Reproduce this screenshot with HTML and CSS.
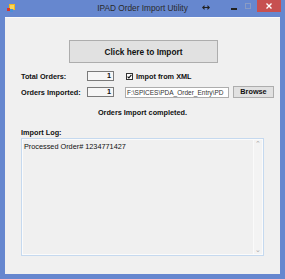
FILE: index.html
```html
<!DOCTYPE html>
<html lang="en">
<head>
  <meta charset="UTF-8">
  <title>IPAD Order Import Utility</title>
  <link rel="stylesheet" href="styles.css">
</head>
<body>

  <div class="window">
    <div class="titlebar">
      <div class="tb-left">
        <svg class="app-icon" width="8" height="8" viewBox="0 0 8 8">
          <rect x="2" y="0" width="6" height="6" fill="#f2b81c"/>
          <rect x="3" y="1" width="4" height="4" fill="#f7d55a"/>
          <rect x="0" y="4" width="3" height="3" fill="#d8362a"/>
          <rect x="3" y="5" width="3" height="3" fill="#4a8fd9"/>
        </svg>
      </div>
      <div class="tb-title">IPAD Order Import Utility</div>
      <div class="tb-right">
        <svg class="resize-icon" width="8" height="5" viewBox="0 0 8 5">
          <path d="M0 2.5 L2.5 0 V5 Z M8 2.5 L5.5 0 V5 Z" fill="#222"/>
          <rect x="2" y="2" width="4" height="1" fill="#222"/>
        </svg>
        <span class="min-btn"></span>
        <span class="max-btn"></span>
        <span class="close-btn">
          <svg width="6" height="6" viewBox="0 0 6 6">
            <path d="M0.5 0.5 L5.5 5.5 M5.5 0.5 L0.5 5.5" stroke="#fff" stroke-width="1.4"/>
          </svg>
        </span>
      </div>
    </div>

    <div class="client">
      <button class="import-btn">Click here to Import</button>

      <div class="row first-row">
        <span class="label">Total Orders:</span>
        <span class="count-box">1</span>
        <span class="check">
          <svg width="7" height="7" viewBox="0 0 7 7">
            <rect x="0.5" y="0.5" width="6" height="6" fill="#fff" stroke="#333"/>
            <path d="M1.6 3.6 L2.9 4.9 L5.4 1.9" fill="none" stroke="#111" stroke-width="1.1"/>
          </svg>
        </span>
        <span class="check-label">Impot from XML</span>
      </div>

      <div class="row">
        <span class="label">Orders Imported:</span>
        <span class="count-box">1</span>
        <span class="path-box">F:\SPICES\PDA_Order_Entry\PD</span>
        <button class="browse-btn">Browse</button>
      </div>

      <div class="status">Orders Import completed.</div>

      <div class="log-label">Import Log:</div>
      <div class="log-box">
        <div class="log-text">Processed Order# 1234771427</div>
        <div class="scrollbar">
          <span class="arrow">&#8963;</span>
          <span class="arrow">&#8964;</span>
        </div>
      </div>
    </div>
  </div>

</body>
</html>
```

FILE: styles.css
```css
body {
  margin: 0;
  font-family: "Liberation Sans", Arial, sans-serif;
  background: #6687cf;
}
.window {
  width: 285px;
  height: 279px;
  background: #6687cf;
  display: flex;
  flex-direction: column;
}
.titlebar {
  height: 17px;
  display: grid;
  grid-template-columns: 1fr auto 1fr;
  align-items: start;
}
.tb-left {
  padding: 4px 0 0 7px;
}
.app-icon { display: block; }
.tb-title {
  font-size: 8.3px;
  color: #2a2a2a;
  line-height: 17px;
}
.tb-right {
  display: flex;
  justify-content: flex-end;
  align-items: flex-start;
  padding-right: 4px;
}
.resize-icon {
  margin-top: 5px;
  margin-right: 21px;
}
.min-btn {
  width: 6px;
  height: 1.5px;
  background: #222;
  margin-top: 8px;
  margin-right: 8px;
}
.max-btn {
  width: 4px;
  height: 4px;
  border: 1px solid #8a9bc4;
  margin-top: 3px;
  margin-right: 6px;
}
.close-btn {
  width: 24px;
  height: 12px;
  background: #c75050;
  display: flex;
  align-items: center;
  justify-content: center;
}
.close-btn svg { display: block; }

.client {
  flex: 1;
  margin: 0 5px 5px 5px;
  background: #f0f0f0;
  border-top: 1px solid #fafafa;
  padding: 22px 0 0 16px;
  display: flex;
  flex-direction: column;
  align-items: flex-start;
  font-size: 7.3px;
  color: #111;
}
.import-btn {
  margin-left: 48px;
  width: 149px;
  height: 23px;
  background: #e1e1e1;
  border: 1px solid #adadad;
  font-family: inherit;
  font-weight: bold;
  font-size: 8.3px;
  color: #111;
  padding: 0;
}
.row {
  display: flex;
  align-items: center;
  height: 12px;
  margin-top: 4px;
}
.first-row { margin-top: 7px; }
.label {
  width: 66px;
  font-weight: bold;
}
.count-box {
  width: 23px;
  height: 8px;
  border: 1px solid #7a7a7a;
  background: #f6f6f6;
  font-weight: bold;
  text-align: right;
  line-height: 8px;
  padding-right: 2px;
}
.check {
  margin-left: 12px;
  height: 7px;
}
.check svg { display: block; }
.check-label {
  margin-left: 3px;
  font-weight: bold;
}
.path-box {
  margin-left: 11px;
  width: 101px;
  height: 9px;
  border: 1px solid #adadad;
  background: #fff;
  color: #333;
  font-size: 6.5px;
  line-height: 9px;
  padding-left: 1px;
  white-space: nowrap;
}
.browse-btn {
  margin-left: 4px;
  width: 41px;
  height: 12px;
  background: #e1e1e1;
  border: 1px solid #adadad;
  font-family: inherit;
  font-weight: bold;
  font-size: 7.3px;
  color: #111;
  padding: 0;
  line-height: 10px;
}
.status {
  align-self: stretch;
  margin: 10px 16px 0 0;
  text-align: center;
  font-weight: bold;
  line-height: 10px;
}
.log-label {
  margin-top: 10px;
  font-weight: bold;
  line-height: 10px;
}
.log-box {
  width: 241px;
  height: 116px;
  border: 1px solid #c5d9ef;
  box-shadow: inset 0 0 0 1px #fbfbfb;
  display: flex;
  justify-content: space-between;
}
.log-text {
  padding: 3px 0 0 2px;
  line-height: 9px;
}
.scrollbar {
  width: 8px;
  margin: 1px 1px 1px 0;
  background: #f3f3f3;
  border-left: 1px solid #fafafa;
  display: flex;
  flex-direction: column;
  justify-content: space-between;
  align-items: center;
}
.arrow {
  color: #a8a8a8;
  font-size: 7px;
  line-height: 8px;
}
```
